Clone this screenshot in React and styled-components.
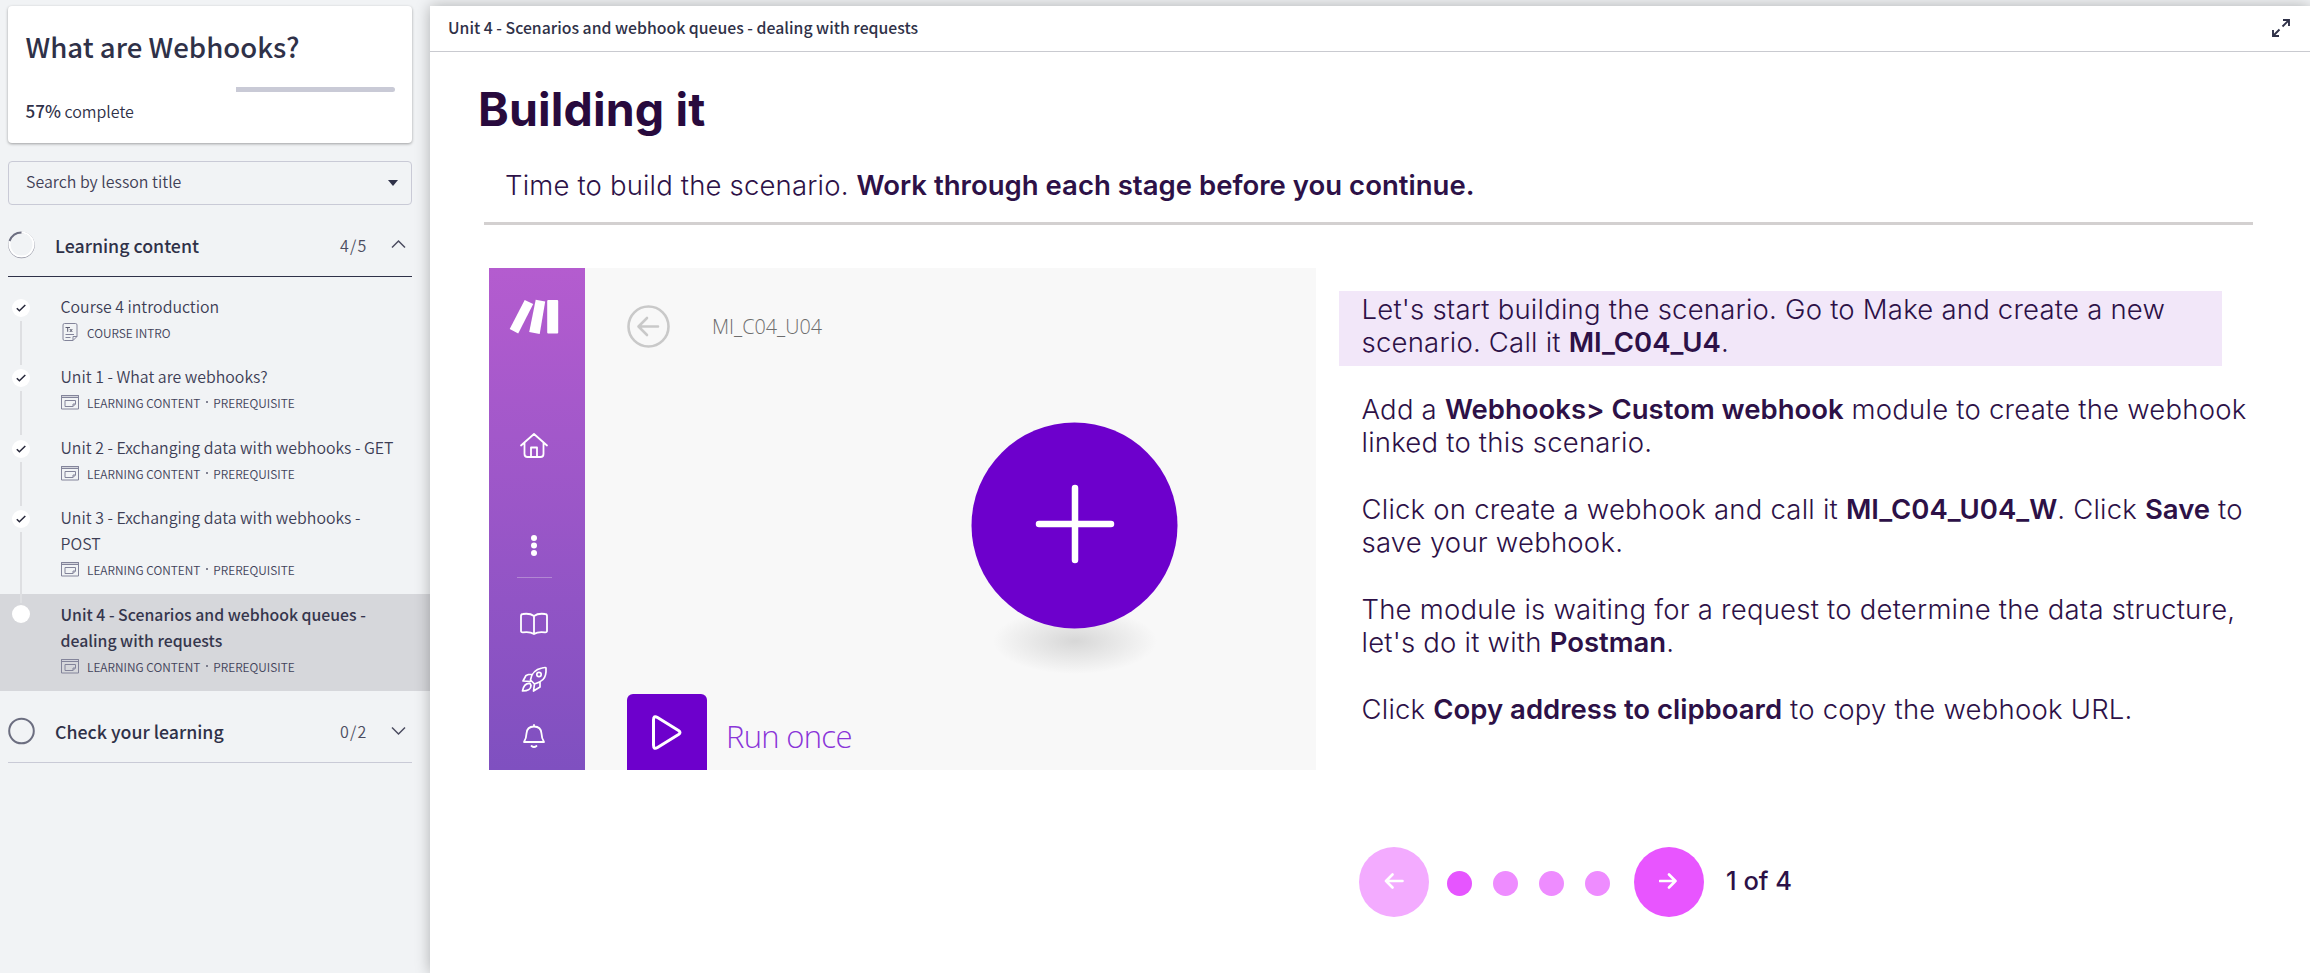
import React from 'react';
import styled, { createGlobalStyle, css } from 'styled-components';

const Global = createGlobalStyle`
  * { box-sizing: border-box; }
  body { margin: 0; background: #f1f3f5; color: #2f3148; font-family: "Noto Sans CJK SC", "Open Sans", sans-serif; }
  h1, h2, p { margin: 0; }
  b { font-weight: 600; }
`;

const Page = styled.div`display: flex; width: 2310px; height: 973px; overflow: hidden; background: #f1f3f5;`;
const Sidebar = styled.aside`width: 430px; flex: none; padding-top: 6px;`;
const CourseCard = styled.section`
  margin: 0 18px 0 8px; height: 137px; padding: 20px 17px 0 17.5px; background: #fff; border-radius: 4px;
  box-shadow: 0 1px 3px rgba(0, 0, 0, 0.35);
`;
const CourseTitle = styled.h1`font-size: 27.6px; line-height: 40px; font-weight: 500; white-space: nowrap;`;
const ProgressTrack = styled.div`display: flex; justify-content: flex-end; height: 5px; margin-top: 21px; background: #fff; border-radius: 3px; overflow: hidden;`;
const ProgressRest = styled.div`width: 43%; background: #c9cad6;`;
const ProgressLabel = styled.p`
  margin-top: 8px; font-size: 16px; line-height: 22px; font-weight: 350;
  b { font-size: 17px; font-weight: 500; }
`;
const SearchBox = styled.div`
  display: flex; align-items: center; justify-content: space-between; margin: 18px 18px 0 8px; height: 44px;
  padding: 0 13px 4px 17px; border: 1px solid #c9cad6; border-radius: 4px; font-size: 15.95px; font-weight: 350; color: #3f4056;
`;
const Caret = styled.i`margin-top: 3px; border: 5px solid transparent; border-top: 6px solid #2f3148; border-bottom: 0;`;
const SectionHead = styled.div`
  display: flex; align-items: center; margin: 0 18px 0 8px; height: 72px; padding-top: 8px;
  border-bottom: 1px solid ${p => p.$line};
`;
const SectionName = styled.h2`flex: 1; margin-left: 20px; font-size: 17.75px; line-height: 26px; font-weight: 500; white-space: nowrap;`;
const Count = styled.span`width: 50px; font-size: 16px; letter-spacing: 1.2px; font-weight: 350; color: #4b4c60;`;
const Chevron = styled.svg`width: 17px; height: 17px; margin-right: 5px; fill: none; stroke: #4b4c60; stroke-width: 1.5;`;
const Ring = styled.svg`width: 27px; height: 28px; flex: none; fill: none;`;

const Lessons = styled.div`padding-top: 14px;`;
const LessonRow = styled.div`
  display: flex; padding-top: ${p => p.$top}px; height: ${p => p.$h}px;
  background: ${p => (p.$active ? '#d6d7db' : 'transparent')};
`;
const Rail = styled.div`width: 60.5px; flex: none; padding-left: 12px; display: flex; flex-direction: column; color: #2f3148;`;
const Dot = styled.span`
  width: 18px; height: 18px; border-radius: 50%; background: #fff; display: flex; align-items: center; justify-content: center; flex: none;
`;
const RailLine = styled.span`width: 2px; height: ${p => p.$h}px; margin: 4px 0 0 8px; background: #dedfe2; flex: none;`;
const LessonBody = styled.div`min-width: 0; margin-top: ${p => (p.$active ? -3 : -5)}px;`;
const LessonTitle = styled.p`
  font-size: 15.88px; line-height: 26px; white-space: nowrap; font-weight: 350; color: #3d3e55;
  ${p => p.$active && css`font-weight: 500; color: #35364d; font-size: 15.82px;`}
`;
const Meta = styled.div`display: flex; align-items: center; height: 26px; margin-top: -1px; font-size: 11.9px; font-weight: 350; color: #42435a; white-space: nowrap;`;
const MetaDot = styled.span`width: 2px; height: 2px; margin: 0 5.5px; border-radius: 50%; background: #5b5c70;`;
const MetaIcon = styled.svg`width: 18px; height: 18px; margin-right: 8.5px; fill: none; stroke: #83849a; stroke-width: 1;`;

const Main = styled.main`
  flex: 1; margin-top: 6px; background: #fff; position: relative;
  box-shadow: 0 0 14px rgba(0, 0, 0, 0.28);
`;
const TopBar = styled.header`
  display: flex; align-items: center; justify-content: space-between; height: 46px; padding: 0 20px 2px 18px;
  border-bottom: 1px solid #c9cad0; font-size: 15.8px; font-weight: 500;
`;
const Slide = styled.article`color: #2d1147; font-family: Inter, "Liberation Sans", sans-serif;`;
const SlideTitle = styled.h2`margin: 28px 0 0 48px; font-size: 46.5px; line-height: 58px; font-weight: 700; color: #280a3d; letter-spacing: 0.15px;`;
const Intro = styled.p`
  margin: 29px 0 0 75px; font-size: 27.5px; line-height: 36px; font-weight: 300; letter-spacing: 0.17px; white-space: nowrap;
  b { letter-spacing: 0.02px; }
`;
const Rule = styled.div`margin: 19px 57px 0 54px; height: 3px; background: #d3d0d0;`;
const Columns = styled.div`display: flex; margin: 43px 0 0 59px;`;

const Shot = styled.figure`display: flex; margin: 0; width: 827px; height: 502px; background: #f8f8f8; overflow: hidden;`;
const ShotNav = styled.div`
  width: 96px; flex: none; display: flex; flex-direction: column; align-items: center; padding: 32px 6px 0 0;
  background: linear-gradient(#b45ccf, #7f50c0);
`;
const NavIcon = styled.svg`display: block; flex: none; margin-top: ${p => p.$gap}px; fill: none; stroke: #fff; stroke-linecap: round; stroke-linejoin: round; overflow: visible;`;
const NavDivider = styled.div`width: 35px; height: 1px; flex: none; margin-top: 21px; background: #b287d3;`;
const Canvas = styled.div`flex: 1; position: relative; font-family: "Open Sans", sans-serif; font-weight: 300;`;
const ShotHeader = styled.div`display: flex; align-items: center; margin: 37px 0 0 42px; font-size: 19.8px; color: #6d6d6d;`;
const BackIcon = styled.svg`width: 43px; height: 43px; margin-right: 42px; fill: none; stroke: #c9c9c9; stroke-width: 2.6; stroke-linecap: round; stroke-linejoin: round;`;
const AddModule = styled.svg`position: absolute; left: 386px; top: 154px; width: 208px; height: 254px;`;
const RunRow = styled.div`position: absolute; left: 42px; bottom: 0; display: flex; align-items: center; color: #8a35d8; font-size: 31px;`;
const RunButton = styled.div`width: 80px; height: 76px; margin-right: 19px; border-radius: 6px 6px 0 0; background: #6d00cc; display: flex; align-items: center; justify-content: center;`;
const RunLabel = styled.span`margin-top: 8px; letter-spacing: -0.7px;`;

const Steps = styled.div`margin-left: 23px; padding-top: 23px; width: 950px;`;
const Step = styled.p`
  padding: 0 0 0 22.5px; margin-bottom: 33.2px; font-size: 27.5px; line-height: 33.4px; font-weight: 300; letter-spacing: 0.22px; white-space: nowrap;
  b { letter-spacing: 0; }
  ${p => p.$current && css`width: 883px; height: 75px; padding-top: 2px; background: #f2e7f9; margin-bottom: 27px;`}
`;
const Pager = styled.nav`display: flex; align-items: center; margin: 76px 0 0 928.5px; height: 71px;`;
const PagerButton = styled.span`
  width: 70px; height: 70px; border-radius: 50%; display: flex; align-items: center; justify-content: center; padding-bottom: 2px;
  background: ${p => (p.$muted ? '#f3abff' : '#e855ff')};
`;
const PagerDots = styled.span`display: flex; gap: 21px; margin: 4px 24px 0 18.5px;`;
const PagerDot = styled.span`width: 25px; height: 25px; border-radius: 50%; background: ${p => (p.$on ? '#e655ff' : '#ee8cff')};`;
const PagerText = styled.span`margin: -2px 0 0 22px; font-size: 25.5px; font-weight: 500;`;

const Check = () => (
  <svg width="10" height="8" viewBox="0 0 10 8" fill="none" stroke="#26273a" strokeWidth="1.5"><path d="M.8 4.2 3.4 6.8 9.3 1" /></svg>
);
const DocIcon = () => (
  <MetaIcon viewBox="0 0 18 18"><path d="M3.500.5h11q1.500 0 1.500 1.500v11.500l-4 4h-8.500q-1.500 0-1.500-1.500V2q0-1.500 1.500-1.500ZM16 13.500h-4v4M4.500 11.500h8.500M4.500 14.500h5" /><path d="M4.500 4.500h4.500M6.700 4.500v4.300M8.800 6l2.500 3M11.300 6 8.800 9" stroke="#5b5c70" /></MetaIcon>
);
const ContentIcon = () => (
  <MetaIcon viewBox="0 0 18 18"><path fill="#d3d4dc" d="M.5 2.500h17v2H.5z" /><path d="M.5 2.500h17v13.500H.5z" /><path d="M4 7.500h10.500v3.500l-2.500 2.500H4zM14.500 11h-2.500v2.500" /></MetaIcon>
);

const lessons = [
  { lines: ['Course 4 introduction'], top: 8, h: 70, line: 44, intro: true },
  { lines: ['Unit 1 - What are webhooks?'], top: 8, h: 71, line: 44 },
  { lines: ['Unit 2 - Exchanging data with webhooks - GET'], top: 8, h: 70, line: 44 },
  { lines: ['Unit 3 - Exchanging data with webhooks -', 'POST'], top: 8, h: 92, line: 71 },
  { lines: ['Unit 4 - Scenarios and webhook queues -', 'dealing with requests'], top: 11, h: 97, active: true },
];

function Lesson({ lines, top, h, line, intro, active }) {
  return (
    <LessonRow $top={top} $h={h} $active={active}>
      <Rail>
        <Dot>{!active && <Check />}</Dot>
        {line && <RailLine $h={line} />}
      </Rail>
      <LessonBody $active={active}>
        {lines.map(l => <LessonTitle key={l} $active={active}>{l}</LessonTitle>)}
        <Meta>
          {intro ? <><DocIcon />COURSE INTRO</> : <><ContentIcon />LEARNING CONTENT<MetaDot />PREREQUISITE</>}
        </Meta>
      </LessonBody>
    </LessonRow>
  );
}

function ScenarioShot() {
  return (
    <Shot>
      <ShotNav>
        <NavIcon $gap={0} width="49" height="35" viewBox="0.800 0.500 49 35">
          <g fill="#fff" stroke="none">
            <path d="M15.500.5 24 4.500 9 34 .5 29.500Z" /><path d="M26.500.3 36 2 30.500 34.500 20 32.500Z" /><rect x="38" y=".5" width="11" height="33.500" rx="1" />
          </g>
        </NavIcon>
        <NavIcon $gap={98} width="28" height="25" viewBox="0 0 28 25" strokeWidth="1.800"><path d="M1 12.500 14 1l13 11.500M4.500 10v11q0 3 3 3h13q3 0 3-3V10M11 24v-9.500h6V24" /></NavIcon>
        <NavIcon $gap={77} width="6" height="21" viewBox="0 0 6 21"><g fill="#fff" stroke="none"><circle cx="3" cy="3" r="3" /><circle cx="3" cy="10.500" r="3" /><circle cx="3" cy="18" r="3" /></g></NavIcon>
        <NavDivider />
        <NavIcon $gap={35} width="28" height="22" viewBox="0 0 28 22" strokeWidth="1.800"><path d="M14 3q-4-3-11-2-2 0-2 2v15q0 1.500 2 1.300 7-1 11 1.700 4-2.700 11-1.700 2 .2 2-1.300V3q0-2-2-2-7-1-11 2v18" /></NavIcon>
        <NavIcon $gap={32} width="25" height="25" viewBox="0 0 25 25" strokeWidth="1.700"><path d="M8.500 13Q10 3 20 1q4-1 4 0 .5 8-3 11.500-3 3-8.500 4.500ZM10 7.500H6.500L4 8.500 1 14l7.500.5M18 15v5l-6.500 4 1-7M8 16.500q-6-.5-7.500 7.500 8.500 0 8.500-5.500Z" /><circle cx="17" cy="7.500" r="2.200" /></NavIcon>
        <NavIcon $gap={32} width="22" height="25" viewBox="0 0 22 25" strokeWidth="1.800"><path d="M11 1v1.500M11 2.500q-7 0-7.500 7-.2 5-2.500 8.500h20q-2.300-3.500-2.500-8.500-.5-7-7.500-7ZM8.500 22q2.500 2 5 0" /></NavIcon>
      </ShotNav>
      <Canvas>
        <ShotHeader>
          <BackIcon viewBox="0 0 43 43"><circle cx="21.500" cy="21.500" r="20" /><path d="M31 21.500H12M20 13l-8.500 8.500 8.500 8.500" /></BackIcon>
          MI_C04_U04
        </ShotHeader>
        <AddModule viewBox="0 0 208 254">
          <defs><radialGradient id="shade"><stop offset="0" stopColor="#d7d7d7" /><stop offset="1" stopColor="#f8f8f8" /></radialGradient></defs>
          <ellipse cx="104" cy="219" rx="82" ry="33" fill="url(#shade)" />
          <circle cx="103.500" cy="103.500" r="103" fill="#6d00cc" />
          <path d="M68 102h72M104 66v72" stroke="#fff" strokeWidth="6.500" strokeLinecap="round" />
        </AddModule>
        <RunRow>
          <RunButton>
            <svg width="30" height="35" viewBox="0 0 30 35" fill="none" stroke="#fff" strokeWidth="3" strokeLinejoin="round"><path d="M1.500 5q0-5 4-2.500l21 13q3 2 0 4l-21 13q-4 2.500-4-2.500Z" /></svg>
          </RunButton>
          <RunLabel>Run once</RunLabel>
        </RunRow>
      </Canvas>
    </Shot>
  );
}

export default function App() {
  return (
    <Page>
      <Global />
      <Sidebar>
        <CourseCard>
          <CourseTitle>What are Webhooks?</CourseTitle>
          <ProgressTrack><ProgressRest /></ProgressTrack>
          <ProgressLabel><b>57%</b> complete</ProgressLabel>
        </CourseCard>
        <SearchBox>Search by lesson title<Caret /></SearchBox>
        <SectionHead $line="#2f3148">
          <Ring viewBox="0 0 27 28"><circle cx="13.500" cy="14" r="12.500" stroke="#8a8b9a" strokeWidth="1.400" /><circle cx="13.500" cy="13.600" r="12" stroke="#fff" strokeWidth="2" /><path d="M1.500 10Q5 1.500 13.500 1.500" stroke="#6c6e80" strokeWidth="2" /></Ring>
          <SectionName>Learning content</SectionName><Count>4/5</Count>
          <Chevron viewBox="0 0 17 17"><path d="M2 11.500 8.500 5l6.500 6.500" /></Chevron>
        </SectionHead>
        <Lessons>{lessons.map(l => <Lesson key={l.lines[0]} {...l} />)}</Lessons>
        <SectionHead $line="#c9cad6">
          <Ring viewBox="0 0 27 28"><circle cx="13.500" cy="14" r="12.300" stroke="#6c6e80" strokeWidth="2" /></Ring>
          <SectionName>Check your learning</SectionName><Count>0/2</Count>
          <Chevron viewBox="0 0 17 17"><path d="M2 5.500 8.500 12 15 5.500" /></Chevron>
        </SectionHead>
      </Sidebar>
      <Main>
        <TopBar>
          Unit 4 - Scenarios and webhook queues - dealing with requests
          <svg width="18" height="18" viewBox="0 0 18 18" fill="none" stroke="#2f3148" strokeWidth="1.900"><path d="M11 1h6v6M17 1l-6.500 6.500M7 17H1v-6M1 17l6.500-6.500" /></svg>
        </TopBar>
        <Slide>
          <SlideTitle>Building it</SlideTitle>
          <Intro>Time to build the scenario. <b>Work through each stage before you continue.</b></Intro>
          <Rule />
          <Columns>
            <ScenarioShot />
            <Steps>
              <Step $current>Let's start building the scenario. Go to Make and create a new<br />scenario. Call it <b>MI_C04_U4</b>.</Step>
              <Step>Add a <b>Webhooks&gt; Custom webhook</b> module to create the webhook<br />linked to this scenario.</Step>
              <Step>Click on create a webhook and call it <b>MI_C04_U04_W</b>. Click <b>Save</b> to<br />save your webhook.</Step>
              <Step>The module is waiting for a request to determine the data structure,<br />let's do it with <b>Postman</b>.</Step>
              <Step>Click <b>Copy address to clipboard</b> to copy the webhook URL.</Step>
            </Steps>
          </Columns>
          <Pager>
            <PagerButton $muted><svg width="20" height="16" viewBox="0 0 20 16" fill="none" stroke="#fff" strokeWidth="2.600" strokeLinecap="round" strokeLinejoin="round"><path d="M18.500 8H2M8.500 1.500 2 8l6.500 6.500" /></svg></PagerButton>
            <PagerDots><PagerDot $on /><PagerDot /><PagerDot /><PagerDot /></PagerDots>
            <PagerButton><svg width="20" height="16" viewBox="0 0 20 16" fill="none" stroke="#fff" strokeWidth="2.600" strokeLinecap="round" strokeLinejoin="round"><path d="M1 8h15.500M10 1.500 16.500 8l-6.500 6.500" /></svg></PagerButton>
            <PagerText>1 of 4</PagerText>
          </Pager>
        </Slide>
      </Main>
    </Page>
  );
}
